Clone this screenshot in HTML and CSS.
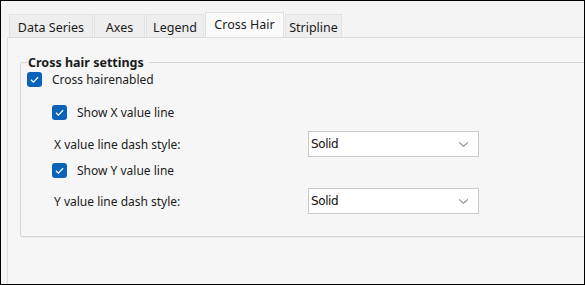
FILE: index.html
```html
<!DOCTYPE html>
<html lang="en">
<head>
    <meta charset="UTF-8">
    <title>Cross Hair</title>
    <link rel="stylesheet" href="styles.css">
</head>
<body>
    <div class="frame">
        <div class="tabs">
            <div class="tab">Data Series</div>
            <div class="tab tab-axes">Axes</div>
            <div class="tab tab-legend">Legend</div>
            <div class="tab active">Cross Hair</div>
            <div class="tab tab-strip">Stripline</div>
        </div>
        <div class="panel">
            <fieldset class="group">
                <legend>Cross hair settings</legend>

                <label class="row row-main">
                    <span class="check"><svg viewBox="0 0 16 16"><path d="M4.2 8.3 L6.8 10.8 L11.8 5.6"/></svg></span>
                    <span>Cross hairenabled</span>
                </label>

                <label class="row row-x">
                    <span class="check"><svg viewBox="0 0 16 16"><path d="M4.2 8.3 L6.8 10.8 L11.8 5.6"/></svg></span>
                    <span>Show X value line</span>
                </label>

                <div class="row row-field">
                    <span class="field-label">X value line dash style:</span>
                    <div class="combo">
                        <span>Solid</span>
                        <svg viewBox="0 0 12 8"><path d="M1 1.5 L6 6 L11 1.5"/></svg>
                    </div>
                </div>

                <label class="row row-y">
                    <span class="check"><svg viewBox="0 0 16 16"><path d="M4.2 8.3 L6.8 10.8 L11.8 5.6"/></svg></span>
                    <span>Show Y value line</span>
                </label>

                <div class="row row-field row-field2">
                    <span class="field-label">Y value line dash style:</span>
                    <div class="combo">
                        <span>Solid</span>
                        <svg viewBox="0 0 12 8"><path d="M1 1.5 L6 6 L11 1.5"/></svg>
                    </div>
                </div>
            </fieldset>
        </div>
    </div>
</body>
</html>
```

FILE: styles.css
```css
* {
    margin: 0;
    padding: 0;
    box-sizing: border-box;
}

body {
    background: #ffffff;
    font-family: 'Noto Sans', sans-serif;
    font-size: 12px;
    color: #1b1b1b;
}

.frame {
    width: 585px;
    height: 285px;
    border: 1px solid #000;
    background: #f4f4f4;
    overflow: hidden;
    display: flex;
    flex-direction: column;
}

/* tab strip */
.tabs {
    display: flex;
    align-items: flex-end;
    height: 36px;
    padding-left: 8px;
}

.tab {
    height: 23px;
    width: 84px;
    background: #eeeeee;
    border: 1px solid #e2e2e2;
    border-bottom: none;
    margin-right: 1px;
    display: flex;
    align-items: center;
    justify-content: center;
    font-size: 12.5px;
    color: #1b1b1b;
    padding-top: 2px;
}

.tab-axes {
    width: 51px;
}

.tab-legend {
    width: 58px;
}

.tab.active {
    height: 25px;
    width: 79px;
    background: #fafafa;
    border-color: #e0e0e0;
    padding-top: 0;
    padding-bottom: 2px;
}

.tab-strip {
    width: 57px;
}

.panel {
    flex: 1;
    margin-left: 6px;
    border-top: 1px solid #dedede;
    border-left: 1px solid #dedede;
    background: #f6f6f6;
    padding: 17px 0 0 12px;
}

/* group box */
.group {
    width: 600px;
    border: 1px solid #d2d6db;
    border-radius: 3px;
    box-shadow: 0 1px 0 #e6e8ea;
    padding: 0 0 22px 6px;
    min-inline-size: 0;
}

.group legend {
    font-size: 12.5px;
    font-weight: 700;
    line-height: 15px;
    padding: 0 5px 0 1px;
    margin-left: 0;
    color: #1b1b1b;
}

.row {
    display: flex;
    align-items: center;
    height: 20px;
}

.row-main {
    margin-top: -1px;
}

.row-x {
    margin-top: 13px;
    padding-left: 25px;
}

.row-y {
    margin-top: 3px;
    padding-left: 25px;
}

.row-field {
    height: 26px;
    margin-top: 9px;
    padding-left: 27px;
}

.row-field2 {
    margin-top: 8px;
}

.check {
    width: 15px;
    height: 15px;
    border-radius: 3px;
    background: #0a63b8;
    margin-right: 10px;
    display: flex;
}

.check svg {
    width: 15px;
    height: 15px;
    fill: none;
    stroke: #ffffff;
    stroke-width: 1.3;
}

.field-label {
    width: 254px;
}

.combo {
    width: 171px;
    height: 26px;
    background: #ffffff;
    border: 1px solid #cacaca;
    display: flex;
    align-items: center;
    justify-content: space-between;
    padding: 0 9px 0 2px;
    font-family: 'DejaVu Sans', sans-serif;
    font-size: 12px;
    letter-spacing: -0.4px;
    color: #111;
}

.combo svg {
    width: 11px;
    height: 7px;
    fill: none;
    stroke: #8a8a8a;
    stroke-width: 1.2;
}
```
